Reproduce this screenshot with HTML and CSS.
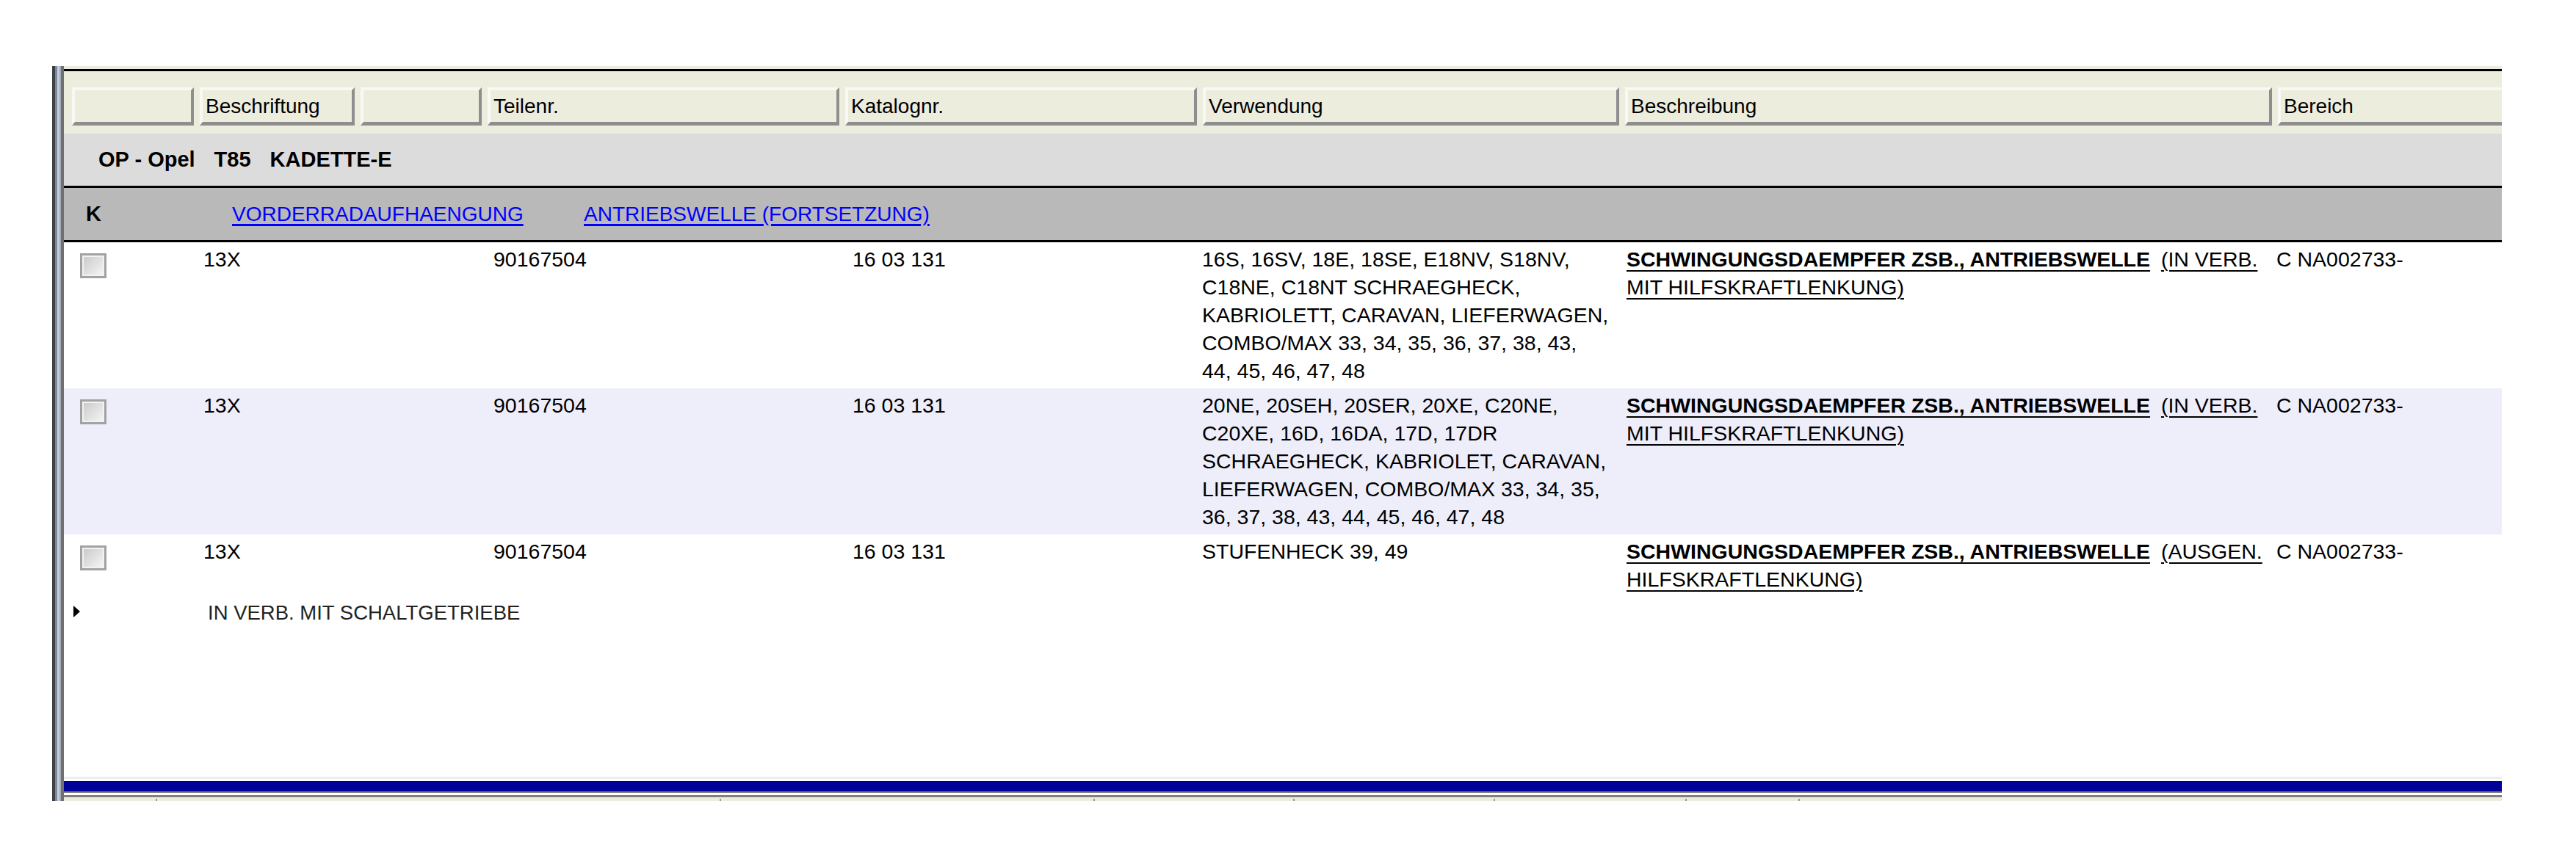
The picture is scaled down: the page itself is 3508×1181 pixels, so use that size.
FILE: index.html
```html
<!DOCTYPE html>
<html lang="de">
<head>
  <meta charset="UTF-8" />
  <title>Teilekatalog</title>
  <link rel="stylesheet" href="styles.css">
</head>
<body>
  <div class="page">
    <div class="window">
      <div class="rail"></div>

      <div class="panel">
        <!-- column headers -->
        <div class="colheads">
          <div class="colhead"></div>
          <div class="colhead">Beschriftung</div>
          <div class="colhead"></div>
          <div class="colhead">Teilenr.</div>
          <div class="colhead">Katalognr.</div>
          <div class="colhead">Verwendung</div>
          <div class="colhead">Beschreibung</div>
          <div class="colhead">Bereich</div>
        </div>

        <!-- vehicle -->
        <div class="model">
          <span>OP - Opel</span><span>T85</span><span>KADETTE-E</span>
        </div>

        <!-- chapter / group -->
        <div class="group">
          <span class="key">K</span>
          <a href="#" class="chapter">VORDERRADAUFHAENGUNG</a>
          <a href="#">ANTRIEBSWELLE (FORTSETZUNG)</a>
        </div>

        <!-- parts -->
        <div class="rows">
          <div class="part">
            <input type="checkbox" class="check">
            <div class="c-label">13X</div>
            <div class="c-part">90167504</div>
            <div class="c-cat">16 03 131</div>
            <div class="c-use">16S, 16SV, 18E, 18SE, E18NV, S18NV,<br>C18NE, C18NT SCHRAEGHECK,<br>KABRIOLETT, CARAVAN, LIEFERWAGEN,<br>COMBO/MAX 33, 34, 35, 36, 37, 38, 43,<br>44, 45, 46, 47, 48</div>
            <div class="c-desc"><a href="#" class="name">SCHWINGUNGSDAEMPFER ZSB., ANTRIEBSWELLE</a> <a href="#" class="remark">(IN VERB.<br>MIT HILFSKRAFTLENKUNG)</a></div>
            <div class="c-range">C NA002733-</div>
          </div>

          <div class="part alt">
            <input type="checkbox" class="check">
            <div class="c-label">13X</div>
            <div class="c-part">90167504</div>
            <div class="c-cat">16 03 131</div>
            <div class="c-use">20NE, 20SEH, 20SER, 20XE, C20NE,<br>C20XE, 16D, 16DA, 17D, 17DR<br>SCHRAEGHECK, KABRIOLET, CARAVAN,<br>LIEFERWAGEN, COMBO/MAX 33, 34, 35,<br>36, 37, 38, 43, 44, 45, 46, 47, 48</div>
            <div class="c-desc"><a href="#" class="name">SCHWINGUNGSDAEMPFER ZSB., ANTRIEBSWELLE</a> <a href="#" class="remark">(IN VERB.<br>MIT HILFSKRAFTLENKUNG)</a></div>
            <div class="c-range">C NA002733-</div>
          </div>

          <div class="part">
            <input type="checkbox" class="check">
            <div class="c-label">13X</div>
            <div class="c-part">90167504</div>
            <div class="c-cat">16 03 131</div>
            <div class="c-use">STUFENHECK 39, 49</div>
            <div class="c-desc"><a href="#" class="name">SCHWINGUNGSDAEMPFER ZSB., ANTRIEBSWELLE</a> <a href="#" class="remark">(AUSGEN.<br>HILFSKRAFTLENKUNG)</a></div>
            <div class="c-range">C NA002733-</div>
          </div>

          <div class="note">
            <div class="c-mark"><span class="arrow"></span></div>
            <div class="c-text">IN VERB. MIT SCHALTGETRIEBE</div>
          </div>
        </div>

        <!-- horizontal scroller + next header strip -->
        <div class="hscroll">
          <div class="track"></div>
          <div class="bar"></div>
          <div class="subhead">
            <span></span><span></span><span></span><span></span><span></span><span></span><span></span>
          </div>
        </div>
      </div>
    </div>
  </div>
</body>
</html>
```

FILE: styles.css
```css
body {
  margin: 0;
  background: #fff;
  color: #000;
  font-family: "Liberation Sans", Arial, sans-serif;
}

.page {
  padding: 90px 0 0 71px;
}

.window {
  display: flex;
  width: 3336px;
  height: 1001px;
}

/* left splitter edge */
.rail {
  flex: none;
  width: 16px;
  background: linear-gradient(to right,
    #3d4248 0 4px,
    #7c8895 4px 7px,
    #c3d1e0 7px 10px,
    #a2abb5 10px 12px,
    #707070 12px 16px);
}

.panel {
  flex: 1;
  min-width: 0;
  display: flex;
  flex-direction: column;
  overflow: hidden;
  border-top: 4px solid #ededde;
}

/* header buttons */
.colheads {
  flex: none;
  display: grid;
  grid-template-columns: 166px 211px 165px 479px 479px 567px 881px 400px;
  column-gap: 8px;
  padding: 22px 0 11px 11px;
  background: #ededde;
  border-top: 3px solid #000;
}

.colhead {
  box-sizing: border-box;
  height: 52px;
  padding: 1px 0 0 4px;
  border: 4px solid;
  border-bottom-width: 5px;
  border-color: #f8f8f4 #8e8e8e #8e8e8e #f8f8f4;
  font-size: 28px;
  line-height: 42px;
  white-space: nowrap;
}

/* vehicle line */
.model {
  flex: none;
  height: 71px;
  line-height: 71px;
  padding-left: 47px;
  background: #dcdcdc;
  border-bottom: 3px solid #000;
  font-size: 29px;
  font-weight: bold;
}

.model span + span {
  margin-left: 26px;
}

/* group line */
.group {
  flex: none;
  display: flex;
  height: 71px;
  line-height: 71px;
  padding-left: 30px;
  background: #b9b9b9;
  border-bottom: 3px solid #000;
  font-size: 28px;
}

.group .key {
  width: 199px;
  font-size: 29px;
  font-weight: bold;
}

.group a {
  color: #0000ff;
  text-decoration-thickness: 3px;
  text-underline-offset: 4px;
}

.group .chapter {
  width: 479px;
}

/* part rows */
.rows {
  flex: 1;
  font-size: 28.5px;
  line-height: 38px;
}

.part,
.note {
  display: grid;
  grid-template-columns: 185px 392px 487px 486px 576px 887px 300px;
}

.part {
  padding: 4px 0 5px;
}

.part.alt {
  background: #eeeefb;
}

.part > div {
  white-space: nowrap;
}

.check {
  appearance: none;
  box-sizing: border-box;
  width: 36px;
  height: 34px;
  margin: 11px 0 0 22px;
  border: 3px solid #a2a2a2;
  background: linear-gradient(135deg, #c8c8c8, #f7f7f7);
  box-shadow: inset 0 0 0 2px #f2f2f2;
}

.c-label { padding-left: 5px; }
.c-part { padding-left: 8px; }
.c-cat { padding-left: 10px; }
.c-desc { padding-left: 2px; }

.c-desc a {
  color: #000;
  text-decoration-thickness: 2px;
  text-underline-offset: 5px;
}

.c-desc .name {
  font-weight: bold;
}

.c-desc .remark {
  margin-left: 7px;
}

.note {
  padding-top: 3px;
}

.note .c-mark {
  padding-left: 13px;
}

.note .c-text {
  grid-column: 2 / -1;
  padding-left: 11px;
  color: #222;
  font-size: 27.5px;
  white-space: nowrap;
}

.arrow {
  display: inline-block;
  width: 0;
  height: 0;
  border-left: 9px solid #000;
  border-top: 8px solid transparent;
  border-bottom: 8px solid transparent;
  vertical-align: 4px;
}

/* bottom scroller */
.hscroll {
  flex: none;
}

.hscroll .track {
  height: 3px;
  margin-bottom: 3px;
  background: #eeeeee;
}

.hscroll .bar {
  height: 14px;
  background: #000099;
  border-bottom: 2px solid #808080;
}

.subhead {
  display: grid;
  grid-template-columns: 127px 768px 509px 272px 273px 261px 154px;
  align-items: end;
  height: 5px;
  margin-top: 3px;
  border-top: 3px solid #808080;
  background: #ededde;
}

.subhead span {
  box-sizing: border-box;
  height: 3px;
  border-right: 2px solid #999;
}
```
